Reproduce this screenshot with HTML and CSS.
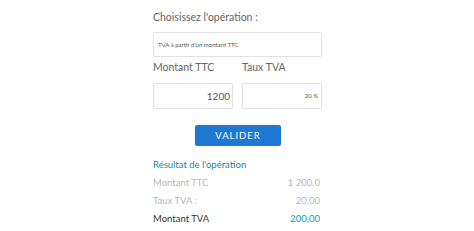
FILE: index.html
```html
<!DOCTYPE html>
<html lang="fr">
  <head>
    <meta charset="UTF-8" />
    <title>Calcul TVA</title>
    <link rel="stylesheet" href="styles.css">
  </head>
  <body>
    <main class="calc">
      <div class="label-top">Choisissez l'opération :</div>
      <div class="select">TVA à partir d'un montant TTC</div>
      <div class="fields">
        <div class="field">
          <div class="label">Montant TTC</div>
          <div class="input big">1200</div>
        </div>
        <div class="field">
          <div class="label">Taux TVA</div>
          <div class="input small">20 %</div>
        </div>
      </div>
      <div class="actions">
        <button class="btn">VALIDER</button>
      </div>
      <div class="result-title">Résultat de l'opération</div>
      <div class="rows">
        <div class="row muted"><span>Montant TTC</span><span>1 200,0</span></div>
        <div class="row muted"><span>Taux TVA :</span><span>20,00</span></div>
        <div class="row total"><span>Montant TVA</span><span class="value">200,00</span></div>
      </div>
    </main>
  </body>
</html>
```

FILE: styles.css
```css
* {
  padding: 0;
  margin: 0;
  box-sizing: border-box;
}
body {
  background: #fff;
  font-family: Lato, "Noto Sans", sans-serif;
  color: #555;
}
.calc {
  width: 169px;
  margin-left: 153px;
  padding-top: 11px;
}
.label-top {
  font-size: 10.5px;
  height: 13px;
  line-height: 13px;
  color: #666;
}
.select {
  margin-top: 8px;
  height: 25px;
  border: 1px solid #e2e2e2;
  border-radius: 2px;
  font-size: 6px;
  line-height: 23px;
  padding-left: 4px;
  color: #555;
}
.fields {
  display: flex;
  gap: 9px;
  margin-top: 4px;
}
.field {
  width: 80px;
}
.label {
  font-size: 10.5px;
  height: 13px;
  line-height: 13px;
  color: #666;
}
.input {
  margin-top: 9px;
  height: 26px;
  border: 1px solid #e2e2e2;
  border-radius: 2px;
  text-align: right;
  padding-right: 2px;
  color: #555;
}
.input.big {
  font-size: 10px;
  line-height: 24px;
}
.input.small {
  font-size: 6px;
  line-height: 24px;
  padding-right: 3px;
}
.actions {
  display: flex;
  justify-content: center;
  margin-top: 16px;
}
.btn {
  width: 86px;
  height: 21px;
  margin-left: 1px;
  border: none;
  border-radius: 2px;
  background: #1f78d3;
  color: #fff;
  font-family: inherit;
  font-size: 9.5px;
  letter-spacing: 1px;
}
.result-title {
  margin-top: 12px;
  font-size: 9.5px;
  line-height: 13px;
  color: #168a9c;
}
.rows {
  margin-top: 3px;
}
.row {
  display: flex;
  justify-content: space-between;
  font-size: 9.5px;
  height: 18px;
  line-height: 18px;
  padding-right: 2px;
}
.muted {
  color: #b8b8b8;
}
.total {
  color: #333;
}
.total .value {
  color: #1a9bb0;
}
```
